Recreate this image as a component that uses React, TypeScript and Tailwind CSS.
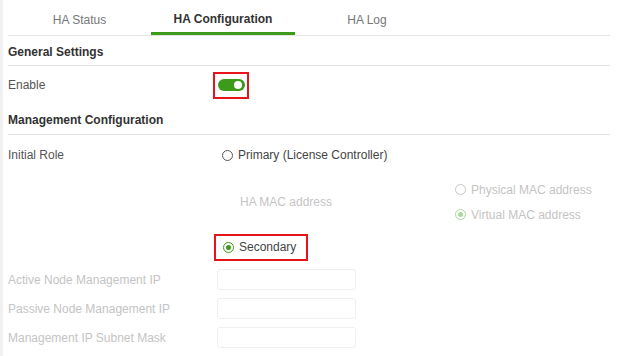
const font = { fontFamily: '"Liberation Sans", Arial, sans-serif' };

function Radio({ checked, faded }: { checked?: boolean; faded?: boolean }) {
  const ring = checked ? (faded ? 'border-[#a9d99a]' : 'border-[#3d9a1a]') : faded ? 'border-[#c8c8c8]' : 'border-[#555]';
  return (
    <span className={`inline-flex items-center justify-center w-[11px] h-[11px] rounded-full border-[1.5px] ${ring} bg-white`}>
      {checked && <span className={`w-[5px] h-[5px] rounded-full ${faded ? 'bg-[#a9d99a]' : 'bg-[#3d9a1a]'}`} />}
    </span>
  );
}

function Field({ label }: { label: string }) {
  return (
    <div className="flex items-center h-[29px]">
      <span className="w-[209px] text-[12px] text-[#c4c4c4]">{label}</span>
      <div className="w-[139px] h-[21px] rounded-[3px] border border-[#efefef] bg-white" />
    </div>
  );
}

export default function App() {
  return (
    <div className="w-[643px] h-[356px] bg-white flex overflow-hidden" style={font}>
      <div className="w-[3px] bg-[#f1f1f1]" />
      <div className="ml-[5px] w-[602px] flex flex-col">
        {/* tabs */}
        <div className="flex h-[36px] border-b border-[#e3e3e3]">
          <div className="w-[143px] flex items-center justify-center pt-[4px] text-[12px] text-[#777]">HA Status</div>
          <div className="w-[144px] flex items-center justify-center text-[12px] font-bold text-[#333] border-b-[3px] border-[#3d9a1a] pt-[6px]">
            HA Configuration
          </div>
          <div className="w-[144px] flex items-center justify-center pt-[4px] text-[12px] text-[#777]">HA Log</div>
        </div>

        <div className="h-[30px] flex items-center pt-[2px] border-b border-[#e3e3e3] text-[12px] font-bold text-[#333]">
          General Settings
        </div>

        <div className="flex items-center h-[38px]">
          <span className="w-[205px] text-[12px] text-[#555]">Enable</span>
          <div className="border-2 border-[#e8141b] w-[36px] h-[27px] flex items-center justify-center">
            <div className="w-[27px] h-[12px] rounded-full bg-[#3d9a1a] flex items-center justify-end pr-[3px]">
              <div className="w-[8px] h-[8px] rounded-full bg-white" />
            </div>
          </div>
        </div>

        <div className="h-[31px] flex items-center pt-[1px] border-b border-[#e3e3e3] text-[12px] font-bold text-[#333]">
          Management Configuration
        </div>

        <div className="flex items-center h-[40px]">
          <span className="w-[214px] text-[12px] text-[#555]">Initial Role</span>
          <label className="flex items-center gap-[5px] text-[12px] text-[#444]">
            <Radio />
            Primary (License Controller)
          </label>
        </div>

        <div className="flex items-center h-[54px]">
          <span className="ml-[232px] w-[215px] text-[12px] text-[#c4c4c4]">HA MAC address</span>
          <div className="flex flex-col gap-[7px]">
            <label className="flex items-center gap-[5px] text-[12px] text-[#c4c4c4]">
              <Radio faded />
              Physical MAC address
            </label>
            <label className="flex items-center gap-[5px] text-[12px] text-[#c4c4c4]">
              <Radio checked faded />
              Virtual MAC address
            </label>
          </div>
        </div>

        <div className="flex items-center h-[36px] pl-[206px]">
          <div className="border-2 border-[#e8141b] w-[94px] h-[27px] flex items-center pl-[7px] gap-[5px] text-[12px] text-[#444]">
            <Radio checked />
            Secondary
          </div>
        </div>

        <Field label="Active Node Management IP" />
        <Field label="Passive Node Management IP" />
        <Field label="Management IP Subnet Mask" />
      </div>
    </div>
  );
}
